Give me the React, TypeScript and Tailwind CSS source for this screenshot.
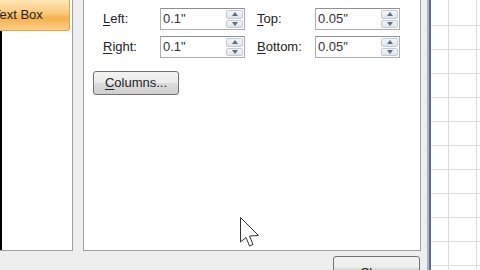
const font = { fontFamily: '"Liberation Sans", Arial, sans-serif' };

function U({ c, rest }: { c: string; rest: string }) {
  return (
    <span>
      <span className="underline underline-offset-2">{c}</span>
      {rest}
    </span>
  );
}

function Spin() {
  return (
    <div className="flex flex-col w-[17px] h-[18px] mr-[1px] gap-[1px]">
      {[0, 1].map((i) => (
        <div
          key={i}
          className="flex-1 flex items-center justify-center border border-[#c3cad4] rounded-[2px] bg-[linear-gradient(to_bottom,#f4f6f8,#dfe4ea)]"
        >
          <svg width="6" height="4" viewBox="0 0 6 4">
            {i === 0 ? (
              <polygon points="3,0 6,4 0,4" fill="#5d6d82" />
            ) : (
              <polygon points="0,0 6,0 3,4" fill="#5d6d82" />
            )}
          </svg>
        </div>
      ))}
    </div>
  );
}

function Field({ label, value, lw, iw }: { label: [string, string]; value: string; lw: string; iw: string }) {
  return (
    <div className="flex items-center">
      <div className={`${lw} text-[13px] text-[#222]`}>
        <U c={label[0]} rest={label[1]} />
      </div>
      <div className={`${iw} h-[22px] flex items-center justify-between bg-white border border-[#abadb3] border-t-[#8e8f8f]`}>
        <span className="pl-[2px] text-[13px] text-[#333]">{value}</span>
        <Spin />
      </div>
    </div>
  );
}

function Sheet() {
  const rows = Array.from({ length: 12 });
  return (
    <div className="flex-1 bg-white flex flex-col">
      {rows.map((_, r) => (
        <div key={r} className={`flex shrink-0 border-b border-[#d9dde3] ${r === 0 ? 'h-[26px]' : 'h-[24px]'}`}>
          <div className="w-[18px] border-r border-[#d9dde3]" />
          <div className="w-[28px] border-r border-[#d9dde3]" />
          <div className="flex-1" />
        </div>
      ))}
    </div>
  );
}

export default function App() {
  return (
    <div className="relative w-[480px] h-[270px] overflow-hidden flex bg-[#eeeeee]" style={font}>
      {/* dialog */}
      <div className="w-[427px] flex flex-col">
        <div className="h-[251px] flex shrink-0">
          {/* category list */}
          <div className="w-[73px] flex flex-col bg-white border-r border-b border-[#a0a0a0]">
            <div className="h-[31px] w-[70px] flex items-center overflow-hidden rounded-br-[3px] border border-l-0 border-t-0 border-[#e0a54e] bg-[linear-gradient(to_bottom,#fee6b8,#fbc878_45%,#f7b04c_60%,#fbcf8a)]">
              <span className="-ml-[7px] text-[13px] text-[#222] whitespace-nowrap">Text Box</span>
            </div>
            <div className="flex-1 flex">
              <div className="w-[2px] bg-black" />
              <div className="flex-1" />
            </div>
          </div>
          <div className="w-[10px]" />
          {/* options panel */}
          <div className="w-[338px] bg-white border-l border-r border-b border-[#a0a0a0] flex flex-col pt-[8px] pl-[9px]">
            <div className="flex flex-col gap-[6px] pl-[10px]">
              <div className="flex gap-[12px]">
                <Field label={['L', 'eft:']} value={'0.1"'} lw="w-[57px]" iw="w-[85px]" />
                <Field label={['T', 'op:']} value={'0.05"'} lw="w-[58px]" iw="w-[85px]" />
              </div>
              <div className="flex gap-[12px]">
                <Field label={['R', 'ight:']} value={'0.1"'} lw="w-[57px]" iw="w-[85px]" />
                <Field label={['B', 'ottom:']} value={'0.05"'} lw="w-[58px]" iw="w-[85px]" />
              </div>
            </div>
            <button className="mt-[13px] w-[86px] h-[24px] flex items-center justify-center rounded-[3px] border border-[#707070] bg-[linear-gradient(to_bottom,#f3f3f3,#ebebeb_50%,#dddddd_51%,#cfcfcf)] text-[13px] text-[#222]">
              <U c="C" rest="olumns..." />
            </button>
          </div>
        </div>
        <div className="flex justify-end pr-[7px] pt-[5px]">
          <button className="w-[87px] h-[24px] flex justify-center pt-[6px] rounded-[3px] border border-[#707070] bg-[linear-gradient(to_bottom,#f3f3f3,#ebebeb_50%,#dddddd_51%,#cfcfcf)] text-[13px] text-[#222]">
            <U c="C" rest="lose" />
          </button>
        </div>
      </div>
      {/* window frame */}
      <div className="w-[4px] flex">
        <div className="w-[2px] bg-[#a9b6c6]" />
        <div className="w-[2px] bg-[#56708f]" />
      </div>
      <Sheet />
      {/* mouse cursor */}
      <svg className="absolute left-[240px] top-[217px]" width="21" height="31" viewBox="0 0 21 31">
        <polygon
          points="0.5,0.5 0.5,25 6,20.5 9.5,29 13,27.5 9.5,19 18.5,18.5"
          fill="white"
          stroke="#333"
          strokeWidth="1"
          strokeLinejoin="round"
        />
      </svg>
    </div>
  );
}
